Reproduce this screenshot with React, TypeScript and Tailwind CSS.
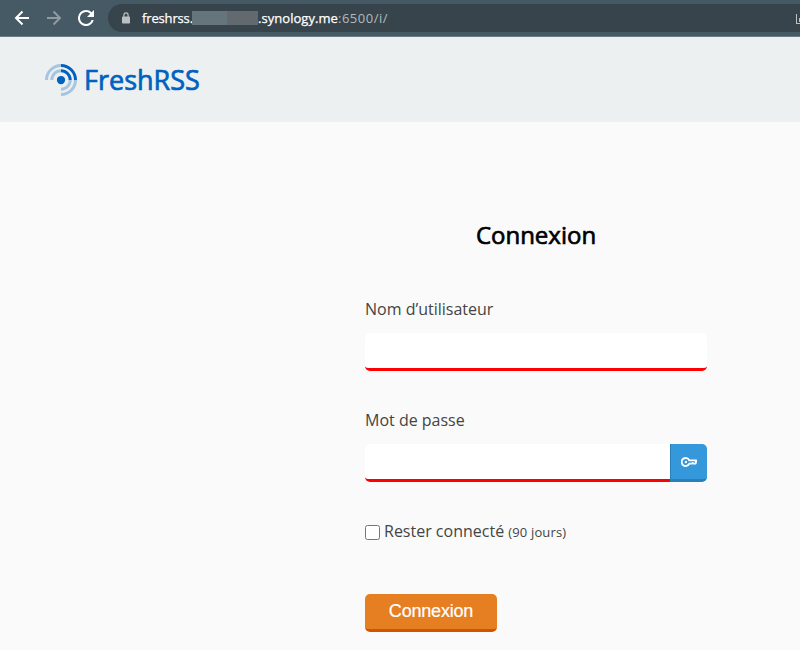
import { useState } from 'react'

function BackIcon() {
  return (
    <svg width="16" height="16" viewBox="0 0 16 16" fill="none" stroke="currentColor" strokeWidth="2">
      <path d="M15 8H2.5M8.5 1.5L2 8l6.5 6.5" />
    </svg>
  )
}

function ForwardIcon() {
  return (
    <svg width="16" height="16" viewBox="0 0 16 16" fill="none" stroke="currentColor" strokeWidth="2">
      <path d="M1 8h12.5M7.5 1.5L14 8l-6.5 6.5" />
    </svg>
  )
}

function ReloadIcon() {
  return (
    <svg width="16" height="16" viewBox="4 4 16 16" fill="currentColor">
      <path d="M17.65 6.35A7.95 7.95 0 0 0 12 4a8 8 0 1 0 7.73 10h-2.08A6 6 0 1 1 12 6c1.66 0 3.14.69 4.22 1.78L13 11h7V4l-2.35 2.35z" />
    </svg>
  )
}

function LockIcon() {
  return (
    <svg width="8" height="12" viewBox="0 0 8 12">
      <path d="M1.9 5V3a2.1 2.1 0 0 1 4.2 0v2" fill="none" stroke="#bcc0c0" strokeWidth="1.2" />
      <rect y="4.5" width="8" height="7" rx="0.8" fill="#bcc0c0" />
    </svg>
  )
}

function Logo() {
  return (
    <svg width="32" height="32" viewBox="0 0 256 256" fill="none" stroke="#0062be" strokeWidth="24">
      <circle cx="128" cy="128" r="33" fill="#0062be" stroke="none" />
      <g strokeOpacity="0.3">
        <path d="M12 128A116 116 0 0 1 128 12" />
        <path d="M54 128A74 74 0 0 1 128 54" />
        <path d="M128 244A116 116 0 0 0 244 128" />
        <path d="M128 202A74 74 0 0 0 202 128" />
      </g>
      <path d="M128 12A116 116 0 0 1 244 128" />
      <path d="M128 54A74 74 0 0 1 202 128" />
    </svg>
  )
}

function KeyIcon() {
  return (
    <svg width="16" height="10" viewBox="0 0 16 10" fill="none" stroke="#fff">
      <path d="M8.3 3.4h7l-.7 3.2h-2.1l-.7-.6-.8.6H8.3A4 4 0 1 1 8.3 3.4z" strokeWidth="1.9" strokeLinejoin="round" />
      <circle cx="4.9" cy="5" r="1.2" fill="#fff" stroke="none" />
    </svg>
  )
}

function BrowserBar() {
  return (
    <div className="flex h-[37px] items-start overflow-hidden border-b border-[#6b7d87] bg-[#455a64] text-white">
      <div className="flex h-9 w-[108px] shrink-0 items-center gap-4 pl-3.5">
        <BackIcon />
        <span className="text-[#8f9ba1]"><ForwardIcon /></span>
        <ReloadIcon />
      </div>
      <div className="mt-1 flex h-7 flex-1 items-center rounded-l-full bg-[#37444b] pl-3.5">
        <LockIcon />
        <div className="ml-3 flex items-center font-['Open_Sans',sans-serif] text-[13px] leading-7 whitespace-nowrap">
          <span className="w-[50px] tracking-[-0.15px] [-webkit-text-stroke:0.25px]">freshrss.</span>
          <span className="flex h-3.5 w-[66px] bg-[#626a70]">
            <span className="w-[35px] bg-[#66747b]" />
          </span>
          <span className="w-20 tracking-[0.05px] [-webkit-text-stroke:0.25px]">.synology.me</span>
          <span className="tracking-[0.5px] text-[#b4babd]">:6500/i/</span>
        </div>
        <div className="mt-0.5 ml-auto h-2.5 w-1 border-b border-l border-[#bcc0c0] pt-1 pl-0.5">
          <div className="h-1 w-1 bg-[#bcc0c0]" />
        </div>
      </div>
    </div>
  )
}

export default function App() {
  const [username, setUsername] = useState('')
  const [password, setPassword] = useState('')
  const [keep, setKeep] = useState(false)

  return (
    <div className="h-[650px] overflow-hidden bg-[#fafafa] font-['Open_Sans',sans-serif] text-[#444]">
      <BrowserBar />
      <header className="flex h-[85px] items-center gap-[7px] bg-[#ecf0f1] pl-[45px]">
        <Logo />
        <span className="text-[27px] leading-8 text-[#0062be] [-webkit-text-stroke:0.7px]">FreshRSS</span>
      </header>

      <main className="ml-[365px] w-[342px] pt-[93px]">
        <h1 className="text-center text-[24px] leading-10 text-black [-webkit-text-stroke:0.7px]">Connexion</h1>
        <form onSubmit={(e) => e.preventDefault()}>
          <label htmlFor="username" className="mt-[42px] block text-base leading-6">Nom d’utilisateur</label>
          <input
            id="username"
            value={username}
            onChange={(e) => setUsername(e.target.value)}
            className="mt-3 block h-[38px] w-full rounded-[5px] border-b-3 border-[#f00] bg-white px-2 outline-none"
          />

          <label htmlFor="password" className="mt-[37px] block text-base leading-6">Mot de passe</label>
          <div className="mt-3 flex h-[38px]">
            <input
              id="password"
              type="password"
              value={password}
              onChange={(e) => setPassword(e.target.value)}
              className="w-[305px] rounded-l-[5px] border-b-3 border-[#f00] bg-white px-2 outline-none"
            />
            <button
              type="button"
              aria-label="Afficher"
              className="flex w-[37px] items-center justify-center rounded-r-[5px] border-b-3 border-l border-b-[#2980b9] border-l-[#2980b9] bg-[#3498db]"
            >
              <KeyIcon />
            </button>
          </div>

          <label className="mt-[37px] flex h-6 items-center text-base leading-6">
            <input
              type="checkbox"
              checked={keep}
              onChange={(e) => setKeep(e.target.checked)}
              className="mt-[3px] mr-1 h-[15px] w-[15px] appearance-none rounded-[2.5px] border border-[#767676] bg-white checked:bg-[#3498db]"
            />
            <span>Rester connecté <small className="text-[13px] tracking-[0.15px]">(90 jours)</small></span>
          </label>

          <button
            type="submit"
            className="mt-[51px] h-[38px] w-[132px] rounded-[5px] border-b-3 border-[#d35400] bg-[#e67e22] font-['Liberation_Sans',sans-serif] text-[18px] tracking-[-0.2px] text-white [-webkit-text-stroke:0.2px]"
          >
            Connexion
          </button>
        </form>
      </main>
    </div>
  )
}
